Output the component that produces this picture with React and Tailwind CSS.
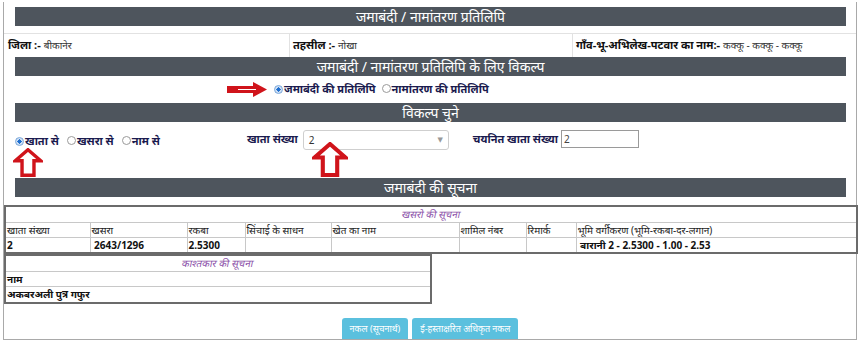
import React from 'react';

const font = { fontFamily: '"Noto Sans", "DejaVu Sans", sans-serif' };

function Bar({ children }) {
  return (
    <div className="mx-[11px] mr-[10px] h-[19px] bg-[#4e555d] text-white text-[14px] leading-[19px] text-center">
      {children}
    </div>
  );
}

function Radio({ checked }) {
  return (
    <span
      className={`inline-block w-[9px] h-[9px] rounded-full border ${
        checked ? 'border-[#7aa7d9] bg-[radial-gradient(circle,#1e6fd0_40%,#cfe0f5_45%)]' : 'border-[#9a9a9a] bg-white'
      }`}
    />
  );
}

function UpArrow({ className }) {
  return (
    <svg viewBox="0 0 34 34" className={className}>
      <polygon
        points="17,2 32,15 24,15 24,32 10,32 10,15 2,15"
        fill="#fff"
        stroke="#d0141b"
        strokeWidth="4"
        strokeLinejoin="miter"
      />
    </svg>
  );
}

export default function App() {
  const cell = 'border border-[#c8c8c8] px-[1px] text-left text-[10px] leading-[14px]';
  const th = cell + ' font-normal text-[#222]';
  const td = cell + ' font-bold text-[#111]';

  return (
    <div className="w-[860px] h-[346px] bg-white" style={font}>
      <div className="ml-[3px] mt-[2px] w-[854px] h-[338px] border-l border-r border-b border-[#a9a9a9] flex flex-col">
        <div className="pt-[5px]">
          <Bar>जमाबंदी / नामांतरण प्रतिलिपि</Bar>
        </div>

        <div className="mt-[7px] h-[24px] border-t border-[#e2e2e2] flex text-[10px] text-[#333]">
          <div className="w-[286px] border-r border-[#e2e2e2] pl-[4px] flex items-center">
            <b className="text-[#111] text-[11px]">जिला :-</b>
            <span className="ml-[3px]">बीकानेर</span>
          </div>
          <div className="w-[283px] border-r border-[#e2e2e2] pl-[3px] flex items-center">
            <b className="text-[#111] text-[11px]">तहसील :-</b>
            <span className="ml-[3px]">नोखा</span>
          </div>
          <div className="flex-1 pl-[3px] flex items-center">
            <b className="text-[#111] text-[11px]">गाँव-भू-अभिलेख-पटवार का नाम:-</b>
            <span className="ml-[3px]">कक्कू - कक्कू - कक्कू</span>
          </div>
        </div>

        <Bar>जमाबंदी / नामांतरण प्रतिलिपि के लिए विकल्प</Bar>

        <div className="h-[27px] flex items-center pl-[222px] text-[11px] font-bold text-[#1a1a4e]">
          <svg viewBox="0 0 42 15" className="w-[42px] h-[15px] mr-[6px]">
            <polygon points="1,4 27,4 27,0 41,7.5 27,15 27,11 1,11" fill="#d0141b" />
            <line x1="12" y1="7.5" x2="30" y2="7.5" stroke="#fff" strokeWidth="1" />
          </svg>
          <Radio checked />
          <span className="ml-[1px]">जमाबंदी की प्रतिलिपि</span>
          <span className="ml-[6px]"><Radio /></span>
          <span className="ml-[1px]">नामांतरण की प्रतिलिपि</span>
        </div>

        <Bar>विकल्प चुने</Bar>

        <div className="relative h-[56px]">
          <div className="flex items-start pt-[8px] text-[11px] font-bold text-[#1a1a4e]">
            <div className="flex items-center pl-[11px] pt-[3px]">
              <Radio checked />
              <span className="ml-[1px]">खाता से</span>
              <span className="ml-[8px]"><Radio /></span>
              <span className="ml-[1px]">खसरा से</span>
              <span className="ml-[8px]"><Radio /></span>
              <span className="ml-[1px]">नाम से</span>
            </div>
            <div className="flex items-start ml-[87px]">
              <span className="pt-[1px]">खाता संख्या</span>
              <div className="ml-[5px] w-[146px] h-[20px] border border-[#cfcfcf] rounded-[3px] flex items-center justify-between px-[5px] font-normal text-[#333] text-[10px]">
                <span>2</span>
                <span className="text-[#999] text-[7px]">▼</span>
              </div>
              <span className="ml-[24px] pt-[1px]">चयनित खाता संख्या</span>
              <div className="ml-[3px] w-[78px] h-[18px] border border-[#9a9a9a] px-[2px] font-normal text-[#444] text-[10px] leading-[16px]">
                2
              </div>
            </div>
          </div>
          <UpArrow className="absolute left-[9px] top-[26px] w-[30px] h-[29px]" />
          <UpArrow className="absolute left-[308px] top-[20px] w-[36px] h-[35px]" />
        </div>

        <Bar>जमाबंदी की सूचना</Bar>

        <table className="mt-[8px] w-[854px] border-collapse border-2 border-[#6b6b6b] table-fixed">
          <colgroup>
            <col className="w-[85px]" />
            <col className="w-[97px]" />
            <col className="w-[58px]" />
            <col className="w-[86px]" />
            <col className="w-[128px]" />
            <col className="w-[67px]" />
            <col className="w-[50px]" />
            <col />
          </colgroup>
          <tbody>
            <tr>
              <td colSpan={8} className="border border-[#c8c8c8] h-[16px] text-center text-[10px] text-[#8a4fa8]">
                <span className="inline-block -skew-x-12">खसरो की सूचना</span>
              </td>
            </tr>
            <tr>
              <th className={th}>खाता संख्या</th>
              <th className={th}>खसरा</th>
              <th className={th}>रकबा</th>
              <th className={th}>सिंचाई के साधन</th>
              <th className={th}>खेत का नाम</th>
              <th className={th}>शामिल नंबर</th>
              <th className={th}>रिमार्क</th>
              <th className={th}>भूमि वर्गीकरण (भूमि-रकबा-दर-लगान)</th>
            </tr>
            <tr>
              <td className={td}>2</td>
              <td className={td}>&nbsp;2643/1296</td>
              <td className={td}>2.5300</td>
              <td className={td}></td>
              <td className={td}></td>
              <td className={td}></td>
              <td className={td}></td>
              <td className={td}>&nbsp;बारानी 2 - 2.5300 - 1.00 - 2.53</td>
            </tr>
          </tbody>
        </table>

        <table className="w-[428px] border-collapse border-2 border-[#6b6b6b]">
          <tbody>
            <tr>
              <td className="border border-[#c8c8c8] h-[15px] text-center text-[10px] text-[#8a4fa8]">
                <span className="inline-block -skew-x-12">काश्तकार की सूचना</span>
              </td>
            </tr>
            <tr>
              <th className={cell + ' font-bold text-[#111] h-[15px]'}>नाम</th>
            </tr>
            <tr>
              <td className={td + ' h-[16px]'}>अकबरअली पुत्र गफुर</td>
            </tr>
          </tbody>
        </table>

        <div className="mt-auto flex justify-center gap-[4px]">
          <button className="h-[21px] px-[8px] rounded-t-[3px] bg-[#5bc0de] text-white text-[9px]">
            नकल (सूचनार्थ)
          </button>
          <button className="h-[21px] px-[8px] rounded-t-[3px] bg-[#5bc0de] text-white text-[9px]">
            ई-हस्ताक्षरित अधिकृत नकल
          </button>
        </div>
      </div>
    </div>
  );
}
